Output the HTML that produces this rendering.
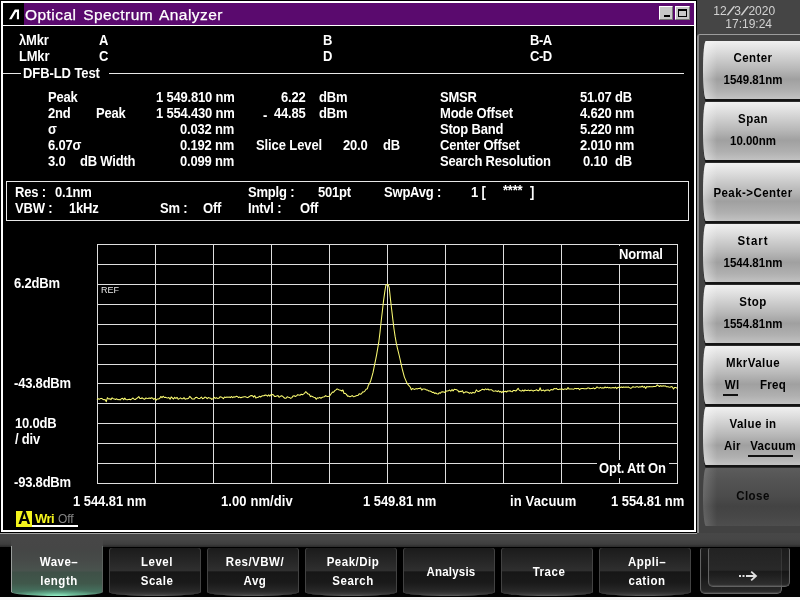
<!DOCTYPE html>
<html><head><meta charset="utf-8"><title>Optical Spectrum Analyzer</title>
<style>
*{margin:0;padding:0;box-sizing:border-box}
html,body{width:800px;height:600px;overflow:hidden;background:#000}
body{position:relative;font-family:"Liberation Sans",sans-serif;color:#fff}
.abs{position:absolute}
#win{position:absolute;left:0;top:0;width:697px;height:533px;background:#000}
#frame{position:absolute;left:1px;top:1px;width:695px;height:531px;border:2px solid #fff;border-right-width:2px}
#title{position:absolute;left:3px;top:3px;width:691px;height:22px;background:#5a0a6e}
#title .blk{position:absolute;left:0;top:0;width:21px;height:22px;background:#000}
#title .tx{position:absolute;left:22px;top:3px;font-size:15.5px;line-height:18px;letter-spacing:.45px;word-spacing:2px;white-space:nowrap;color:#fff;-webkit-text-stroke:.25px #fff}
#tline{position:absolute;left:3px;top:24.7px;width:691px;height:1px;background:#fff}
.wb{position:absolute;top:3px;width:14px;height:14px;background:#c8c8c8;border:1px solid #fff;border-right-color:#777;border-bottom-color:#777}
.t{position:absolute;font-size:13px;line-height:16px;font-weight:bold;white-space:nowrap;color:#fff;letter-spacing:-.2px;transform:scaleY(1.08);transform-origin:0 12.5px;margin:.5px 0 0 .5px}
.t.ref{font-size:9px;font-weight:normal;line-height:12px;color:#e8e8e8;letter-spacing:0;transform:none}
.hl{position:absolute;height:1px;background:#e8e8e8}
#resbox{position:absolute;left:6px;top:181px;width:683px;height:40px;border:1px solid #e8e8e8}
#chart{position:absolute;left:0;top:0}
/* right panel */
#side{position:absolute;left:697px;top:0;width:103px;height:547px;background:#454545}
#date{position:absolute;left:0;top:5px;width:103px;font-size:12px;line-height:13px;color:#d2d2d2;white-space:nowrap}
#date span{position:absolute}
#date b{font-weight:normal;margin:0 2.1px;display:inline-block;transform:scaleX(1.9) skewX(-8deg)}
#sframe{position:absolute;left:0;top:34px;width:110px;height:520px;border:1px solid #9c9c9c;border-left:2px solid #8c8c8c;border-radius:3px 0 0 0;background:#424242}
.sb{position:absolute;left:5.7px;width:100px;height:58.2px;border-radius:3px 0 0 3px / 30px 0 0 30px;
  background:linear-gradient(180deg,#f0f0f0 0%,#dedede 16%,#b8b8b8 48%,#a0a0a0 66%,#b0b0b0 86%,#c2c2c2 100%);
  box-shadow:0 2.4px 0 #141414;color:#000;font-weight:bold;font-size:11.5px}
.sb:before{content:"";position:absolute;left:0;top:0;width:14px;height:100%;border-radius:inherit;background:linear-gradient(90deg,rgba(255,255,255,.42),rgba(255,255,255,0))}
.sb.dark{background:linear-gradient(180deg,#5c5c5c 0%,#545454 20%,#4b4b4b 50%,#434343 66%,#484848 85%,#4e4e4e 100%);box-shadow:none;color:#080808}
.sb.dark:before{background:linear-gradient(90deg,rgba(255,255,255,.16),rgba(255,255,255,0))}
.sb .l{position:absolute;left:1px;width:98px;text-align:center;line-height:14px;white-space:nowrap;letter-spacing:.45px}
.sb .l2{letter-spacing:0}
.sb .l span{letter-spacing:.3px}
.sb .ul{position:absolute;height:1.6px;background:#111}
/* bottom */
#band{position:absolute;left:0;top:533px;width:800px;height:14px;background:linear-gradient(180deg,#474747 0,#464646 45%,#3e3e3e 80%,#2a2a2a 100%)}
#band b{position:absolute;left:11px;top:1px;width:92px;height:13px;background:linear-gradient(180deg,#474747,#464646)}
#band i{position:absolute;left:0;top:0;width:697px;height:1px;background:#a4a4a4}
#bot{position:absolute;left:0;top:547px;width:800px;height:51px;background:#000}
#botline{position:absolute;left:0;top:597px;width:800px;height:3px;background:#f4f4f4}
.tab{position:absolute;top:1px;width:92px;height:48px;border-radius:3px 3px 46px 46px / 3px 3px 4px 4px;
  background:linear-gradient(180deg,#1b1b1b 0%,#242424 22%,#2f2f2f 47%,#161616 50%,#1a1a1a 72%,#282828 90%,#3a3a3a 96%,#5c5c5c 100%);
  box-shadow:inset 1px 0 0 #424242,inset -1px 0 0 #424242}
.tab.sel{top:-1px;height:50px;border-radius:0 0 46px 46px / 0 0 4px 4px;
  background:radial-gradient(ellipse 46px 7px at 50% 100%,rgba(150,240,200,.95) 0%,rgba(120,210,170,.55) 45%,rgba(90,160,130,0) 100%),
  linear-gradient(180deg,#464646 0%,#454746 12%,#474b49 30%,#49534e 50%,#3f5047 52%,#40584b 75%,#467360 92%,#5fa385 100%);
  box-shadow:inset 1px 0 0 #9a9e9c,inset -1px 0 0 #5c625f}
.tl{position:absolute;left:1.5px;width:92px;text-align:center;font-size:11.5px;line-height:14px;font-weight:bold;color:#fff;letter-spacing:.5px;white-space:nowrap}
.atab{position:absolute;width:82px;border-radius:2px 2px 5px 5px;border:1px solid #626262;border-top:none;box-shadow:inset 0 -1px 1px rgba(255,255,255,.12)}
.t,.l,.tl,#date,.tx{will-change:transform}
.l,.tl{transform:scaleY(1.12);transform-origin:0 10.8px}
</style></head>
<body>
<div id="win">
  <div id="frame"></div>
  <div id="title"><div class="blk"></div>
    <svg class="abs" style="left:5px;top:4.6px" width="13" height="13" viewBox="0 0 13 13"><path d="M1 11.2 L6.8 1.6 L11 1.6 L11 11.2 L8.9 11.2 L8.9 3.9 L8.0 3.9 L3.6 11.2 Z" fill="#fff"/></svg>
    <span class="tx">Optical Spectrum Analyzer</span>
    <div class="wb" style="left:656px"><i class="abs" style="left:4px;top:8px;width:6px;height:2px;background:#000"></i></div>
    <div class="wb" style="left:672px;width:15px"><i class="abs" style="left:2px;top:2px;width:9px;height:8px;border:1px solid #000;border-top-width:2px"></i></div>
  </div>
  <div id="tline"></div>
  <div class="hl" style="left:3px;top:73px;width:18px"></div>
  <div class="hl" style="left:109px;top:73px;width:575px"></div>
  <div id="resbox"></div>
  <svg id="chart" width="697" height="533" viewBox="0 0 697 533" shape-rendering="crispEdges">
    <g fill="#dedede"><rect x="97" y="244" width="1" height="240"/><rect x="155" y="244" width="1" height="240"/><rect x="213" y="244" width="1" height="240"/><rect x="271" y="244" width="1" height="240"/><rect x="329" y="244" width="1" height="240"/><rect x="387" y="244" width="1" height="240"/><rect x="445" y="244" width="1" height="240"/><rect x="503" y="244" width="1" height="240"/><rect x="561" y="244" width="1" height="240"/><rect x="619" y="244" width="1" height="240"/><rect x="677" y="244" width="1" height="240"/><rect x="97" y="244" width="581" height="1"/><rect x="97" y="264" width="581" height="1"/><rect x="97" y="284" width="581" height="1"/><rect x="97" y="304" width="581" height="1"/><rect x="97" y="324" width="581" height="1"/><rect x="97" y="344" width="581" height="1"/><rect x="97" y="364" width="581" height="1"/><rect x="97" y="383" width="581" height="1"/><rect x="97" y="403" width="581" height="1"/><rect x="97" y="423" width="581" height="1"/><rect x="97" y="443" width="581" height="1"/><rect x="97" y="463" width="581" height="1"/><rect x="97" y="483" width="581" height="1"/></g>
    <polyline points="97.0,399.7 98.2,398.7 99.3,399.3 100.5,398.6 101.6,398.4 102.8,399.2 104.0,399.7 105.1,399.6 106.3,401.7 107.4,397.7 108.6,399.0 109.8,398.7 110.9,399.6 112.1,397.9 113.2,398.7 114.4,399.1 115.6,399.5 116.7,398.8 117.9,399.7 119.0,399.4 120.2,400.0 121.4,398.7 122.5,398.3 123.7,399.6 124.8,398.1 126.0,399.6 127.2,399.8 128.3,399.4 129.5,399.2 130.6,399.7 131.8,398.9 133.0,398.0 134.1,399.2 135.3,399.5 136.4,398.6 137.6,397.8 138.8,396.6 139.9,398.4 141.1,398.5 142.2,397.8 143.4,398.8 144.6,399.3 145.7,398.1 146.9,398.3 148.0,398.4 149.2,398.0 150.4,398.5 151.5,397.7 152.7,398.2 153.8,399.4 155.0,398.4 156.2,400.1 157.3,399.0 158.5,399.0 159.6,398.6 160.8,396.5 162.0,397.6 163.1,396.2 164.3,397.5 165.4,397.3 166.6,397.7 167.8,398.0 168.9,397.5 170.1,399.3 171.2,396.9 172.4,398.0 173.6,399.0 174.7,397.3 175.9,398.5 177.0,397.3 178.2,399.3 179.4,398.6 180.5,397.9 181.7,398.8 182.8,398.8 184.0,397.6 185.2,399.2 186.3,398.8 187.5,398.7 188.6,398.2 189.8,396.4 191.0,397.6 192.1,399.0 193.3,398.9 194.4,399.0 195.6,397.4 196.8,397.3 197.9,398.2 199.1,398.6 200.2,398.2 201.4,397.0 202.6,398.7 203.7,398.3 204.9,397.1 206.0,397.4 207.2,398.7 208.4,397.5 209.5,398.1 210.7,398.2 211.8,399.4 213.0,398.6 214.2,397.3 215.3,398.4 216.5,397.8 217.6,398.4 218.8,398.3 220.0,396.8 221.1,397.0 222.3,397.6 223.4,398.6 224.6,397.0 225.8,397.5 226.9,397.1 228.1,397.3 229.2,397.1 230.4,397.6 231.6,396.5 232.7,397.6 233.9,396.8 235.0,397.2 236.2,396.3 237.4,396.5 238.5,397.6 239.7,397.1 240.8,397.8 242.0,397.2 243.2,396.9 244.3,396.7 245.5,396.8 246.6,397.2 247.8,397.6 249.0,396.8 250.1,396.1 251.3,395.6 252.4,395.7 253.6,397.1 254.8,395.7 255.9,398.1 257.1,397.4 258.2,397.3 259.4,396.3 260.6,397.0 261.7,396.1 262.9,395.8 264.0,395.7 265.2,395.0 266.4,395.2 267.5,396.1 268.7,394.8 269.8,396.2 271.0,394.7 272.2,394.5 273.3,394.7 274.5,396.4 275.6,396.5 276.8,395.9 278.0,395.6 279.1,397.3 280.3,396.4 281.4,395.7 282.6,396.2 283.8,397.5 284.9,398.2 286.1,398.2 287.2,396.7 288.4,397.3 289.6,397.6 290.7,398.4 291.9,397.6 293.0,396.0 294.2,395.8 295.4,396.5 296.5,395.9 297.7,394.7 298.8,394.9 300.0,395.3 301.2,394.2 302.3,394.8 303.5,394.1 304.6,393.2 305.8,391.7 307.0,393.0 308.1,394.0 309.3,394.3 310.4,396.6 311.6,396.1 312.8,396.8 313.9,397.2 315.1,397.6 316.2,399.3 317.4,397.9 318.6,398.1 319.7,397.4 320.9,398.2 322.0,397.5 323.2,396.9 324.4,396.8 325.5,395.6 326.7,396.3 327.8,396.5 329.0,396.3 330.2,395.2 331.3,393.5 332.5,392.1 333.6,392.3 334.8,390.6 336.0,389.9 337.1,388.9 338.3,389.5 339.4,390.0 340.6,390.2 341.8,391.0 342.9,390.0 344.1,393.5 345.2,393.4 346.4,394.4 347.6,396.1 348.7,396.1 349.9,396.7 351.0,396.3 352.2,395.6 353.4,396.7 354.5,396.4 355.7,395.9 356.8,395.6 358.0,395.5 359.2,393.8 360.3,394.2 361.5,393.8 362.6,391.9 363.8,392.0 365.0,390.8 366.1,389.2 367.3,388.8 368.4,385.1 369.6,383.5 370.8,380.5 371.9,376.7 373.1,372.2 374.2,366.6 375.4,360.9 376.6,354.8 377.7,348.3 378.9,341.3 380.0,332.3 381.2,321.0 382.4,310.7 383.5,301.1 384.7,292.4 385.8,285.5 387.0,284.4 388.2,284.4 389.3,288.2 390.5,299.5 391.6,309.0 392.8,319.1 394.0,329.0 395.1,336.4 396.3,343.2 397.4,348.1 398.6,353.0 399.8,358.0 400.9,363.2 402.1,368.3 403.2,372.7 404.4,377.1 405.6,379.9 406.7,382.5 407.9,384.4 409.0,385.7 410.2,387.0 411.4,389.8 412.5,388.5 413.7,389.0 414.8,389.4 416.0,388.6 417.2,388.9 418.3,388.4 419.5,388.4 420.6,387.9 421.8,390.1 423.0,388.9 424.1,388.9 425.3,389.2 426.4,390.0 427.6,390.1 428.8,391.0 429.9,391.0 431.1,391.4 432.2,392.4 433.4,392.2 434.6,393.4 435.7,392.9 436.9,393.7 438.0,394.1 439.2,392.8 440.4,393.3 441.5,391.9 442.7,391.8 443.8,391.9 445.0,392.4 446.2,391.1 447.3,390.9 448.5,390.8 449.6,390.0 450.8,391.2 452.0,389.5 453.1,390.9 454.3,389.3 455.4,389.5 456.6,389.8 457.8,390.4 458.9,392.0 460.1,391.2 461.2,391.7 462.4,390.7 463.6,393.0 464.7,392.5 465.9,391.8 467.0,391.9 468.2,392.4 469.4,393.4 470.5,392.6 471.7,393.4 472.8,392.3 474.0,392.9 475.2,392.4 476.3,389.9 477.5,391.2 478.6,391.5 479.8,390.7 481.0,390.2 482.1,389.3 483.3,389.5 484.4,389.9 485.6,388.9 486.8,389.6 487.9,389.0 489.1,390.0 490.2,389.7 491.4,389.7 492.6,390.7 493.7,391.2 494.9,391.1 496.0,390.8 497.2,391.7 498.4,390.7 499.5,391.9 500.7,391.4 501.8,392.6 503.0,391.3 504.2,391.7 505.3,391.3 506.5,392.0 507.6,391.0 508.8,391.1 510.0,390.8 511.1,391.5 512.3,391.7 513.4,390.4 514.6,390.6 515.8,391.0 516.9,390.0 518.1,388.3 519.2,390.1 520.4,390.8 521.6,391.1 522.7,390.1 523.9,391.2 525.0,389.9 526.2,390.5 527.4,390.5 528.5,390.1 529.7,390.7 530.8,390.3 532.0,390.3 533.2,391.2 534.3,390.4 535.5,390.2 536.6,389.8 537.8,390.6 539.0,390.6 540.1,387.8 541.3,390.8 542.4,390.6 543.6,390.1 544.8,391.1 545.9,390.1 547.1,390.3 548.2,389.8 549.4,391.0 550.6,389.8 551.7,389.6 552.9,390.0 554.0,388.6 555.2,388.7 556.4,388.4 557.5,389.4 558.7,389.6 559.8,389.0 561.0,389.3 562.2,388.9 563.3,389.6 564.5,389.0 565.6,389.0 566.8,389.5 568.0,387.5 569.1,389.1 570.3,389.0 571.4,388.9 572.6,389.1 573.8,389.2 574.9,388.4 576.1,388.6 577.2,388.6 578.4,388.4 579.6,389.7 580.7,388.7 581.9,388.4 583.0,388.5 584.2,388.7 585.4,388.8 586.5,388.7 587.7,388.0 588.8,387.9 590.0,388.7 591.2,388.6 592.3,388.5 593.5,387.9 594.6,388.8 595.8,388.2 597.0,386.9 598.1,387.7 599.3,388.1 600.4,387.4 601.6,388.1 602.8,387.7 603.9,388.1 605.1,387.0 606.2,387.8 607.4,387.3 608.6,387.9 609.7,387.5 610.9,388.1 612.0,387.7 613.2,387.5 614.4,388.0 615.5,387.2 616.7,388.6 617.8,387.4 619.0,387.3 620.2,387.4 621.3,386.9 622.5,387.5 623.6,386.9 624.8,387.2 626.0,387.0 627.1,387.3 628.3,386.9 629.4,387.6 630.6,388.4 631.8,387.7 632.9,386.7 634.1,387.1 635.2,387.3 636.4,386.8 637.6,386.8 638.7,387.4 639.9,386.8 641.0,387.0 642.2,386.1 643.4,387.3 644.5,386.5 645.7,388.4 646.8,386.5 648.0,386.9 649.2,386.5 650.3,386.7 651.5,386.7 652.6,386.8 653.8,386.4 655.0,386.6 656.1,386.2 657.3,384.9 658.4,385.8 659.6,386.5 660.8,385.6 661.9,386.4 663.1,385.7 664.2,386.1 665.4,385.9 666.6,386.8 667.7,386.7 668.9,387.0 670.0,387.2 671.2,386.6 672.4,387.1 673.5,389.0 674.7,387.4 675.8,387.4 677.0,388.4" fill="none" stroke="#fbfb72" stroke-width="1.05" shape-rendering="auto" stroke-linejoin="round"/>
  </svg>
<span class="t" style="top:32.5px;left:18px;">λMkr</span>
<span class="t" style="top:32.5px;left:98px;">A</span>
<span class="t" style="top:32.5px;left:322px;">B</span>
<span class="t" style="top:32.5px;left:529.7px;letter-spacing:-.5px">B-A</span>
<span class="t" style="top:48.5px;left:18px;">LMkr</span>
<span class="t" style="top:48.5px;left:98px;">C</span>
<span class="t" style="top:48.5px;left:322px;">D</span>
<span class="t" style="top:48.5px;left:529.7px;letter-spacing:-.5px">C-D</span>
<span class="t" style="top:65.0px;left:22.2px;letter-spacing:-.08px">DFB-LD Test</span>
<span class="t" style="top:89.4px;left:47px;">Peak</span>
<span class="t" style="top:89.4px;right:462.7px;">1 549.810 nm</span>
<span class="t" style="top:89.4px;right:391.2px;">6.22</span>
<span class="t" style="top:89.4px;left:318.5px;">dBm</span>
<span class="t" style="top:89.4px;left:439.5px;">SMSR</span>
<span class="t" style="top:89.4px;right:65px;">51.07 dB</span>
<span class="t" style="top:105.4px;left:47px;">2nd</span>
<span class="t" style="top:105.4px;left:95px;">Peak</span>
<span class="t" style="top:105.4px;right:462.7px;">1 554.430 nm</span>
<span class="t" style="top:107.4px;left:262px;">-</span>
<span class="t" style="top:105.4px;right:391.2px;">44.85</span>
<span class="t" style="top:105.4px;left:318.5px;">dBm</span>
<span class="t" style="top:105.4px;left:439.4px;">Mode Offset</span>
<span class="t" style="top:105.4px;right:63px;">4.620 nm</span>
<span class="t" style="top:121.4px;left:47px;">σ</span>
<span class="t" style="top:121.4px;right:462.7px;">0.032 nm</span>
<span class="t" style="top:121.4px;left:439.4px;">Stop Band</span>
<span class="t" style="top:121.4px;right:63px;">5.220 nm</span>
<span class="t" style="top:137.4px;left:47px;">6.07σ</span>
<span class="t" style="top:137.4px;right:462.7px;">0.192 nm</span>
<span class="t" style="top:137.4px;left:255.5px;letter-spacing:-.1px">Slice Level</span>
<span class="t" style="top:137.4px;right:329.5px;">20.0</span>
<span class="t" style="top:137.4px;left:382.5px;">dB</span>
<span class="t" style="top:137.4px;left:439.4px;">Center Offset</span>
<span class="t" style="top:137.4px;right:63px;">2.010 nm</span>
<span class="t" style="top:153.4px;left:47px;">3.0</span>
<span class="t" style="top:153.4px;left:79px;">dB Width</span>
<span class="t" style="top:153.4px;right:462.7px;">0.099 nm</span>
<span class="t" style="top:153.4px;left:439.4px;">Search Resolution</span>
<span class="t" style="top:153.4px;right:89.20000000000005px;">0.10</span>
<span class="t" style="top:153.4px;left:614.5px;">dB</span>
<span class="t" style="top:184.0px;left:14px;">Res :</span>
<span class="t" style="top:184.0px;left:54px;">0.1nm</span>
<span class="t" style="top:184.0px;left:247px;">Smplg :</span>
<span class="t" style="top:184.0px;left:317px;">501pt</span>
<span class="t" style="top:184.0px;left:383px;">SwpAvg :</span>
<span class="t" style="top:184.0px;left:470px;">1 [</span>
<span class="t" style="top:182.5px;left:502px;">****</span>
<span class="t" style="top:184.0px;left:529px;">]</span>
<span class="t" style="top:200.0px;left:14px;">VBW :</span>
<span class="t" style="top:200.0px;left:68px;">1kHz</span>
<span class="t" style="top:200.0px;left:159px;">Sm :</span>
<span class="t" style="top:200.0px;left:202px;">Off</span>
<span class="t" style="top:200.0px;left:247px;">Intvl :</span>
<span class="t" style="top:200.0px;left:299px;">Off</span>
<span class="t" style="top:275.5px;left:13px;">6.2dBm</span>
<span class="t" style="top:375.5px;left:13px;">-43.8dBm</span>
<span class="t" style="top:415.1px;left:14px;">10.0dB</span>
<span class="t" style="top:431.3px;left:14px;">/ div</span>
<span class="t" style="top:474.8px;left:13px;">-93.8dBm</span>
<span class="t" style="top:493.0px;left:72.5px;letter-spacing:-.05px">1 544.81 nm</span>
<span class="t" style="top:493.0px;left:220px;letter-spacing:.1px">1.00 nm/div</span>
<span class="t" style="top:493.0px;left:362px;letter-spacing:-.05px">1 549.81 nm</span>
<span class="t" style="top:493.0px;left:509px;letter-spacing:.15px">in Vacuum</span>
<span class="t" style="top:493.0px;right:13px;letter-spacing:-.05px">1 554.81 nm</span>
<span class="t" style="top:246.0px;left:614px;background:#000;padding:0 4px 0 4px;">Normal</span>
<span class="t" style="top:460.0px;left:596px;background:#000;padding:0 3px 0 2px;">Opt. Att On</span>
<span class="t ref" style="top:283px;left:100px;">REF</span>
  <!-- trace status -->
  <div class="abs" style="left:16px;top:511px;width:16px;height:15.5px;background:#f4f41e"></div>
  <span class="t" style="left:17.2px;top:507.8px;font-size:17.5px;line-height:20px;color:#000;transform:none;letter-spacing:0">A</span>
  <span class="t" style="left:34px;top:510.5px;color:#f4f41e;transform:none;letter-spacing:-.5px">Wri</span>
  <span class="t" style="left:57.5px;top:510.7px;color:#858585;font-weight:normal;font-size:12px;transform:none;letter-spacing:-.1px">Off</span>
  <div class="abs" style="left:32px;top:524.7px;width:46px;height:2px;background:#fff"></div>
</div>
<div id="side">
  <div id="date"><span style="left:16.3px;top:0">12<b>/</b>3<b>/</b>2020</span><span style="left:28.3px;top:13px">17:19:24</span></div>
  <div id="sframe"></div>
<div class="sb" style="top:41px"><span class="l l1" style="top:9.5px">Center</span><span class="l l2" style="top:31.6px">1549.81nm</span></div>
<div class="sb" style="top:102px"><span class="l l1" style="top:9.5px">Span</span><span class="l l2" style="top:31.6px">10.00nm</span></div>
<div class="sb" style="top:163px"><span class="l l1" style="top:23px">Peak-&gt;Center</span></div>
<div class="sb" style="top:224px"><span class="l l1" style="top:9.5px"><span style="letter-spacing:1px">Start</span></span><span class="l l2" style="top:31.6px">1544.81nm</span></div>
<div class="sb" style="top:285px"><span class="l l1" style="top:9.5px">Stop</span><span class="l l2" style="top:31.6px">1554.81nm</span></div>
<div class="sb" style="top:346px"><span class="l l1" style="top:9.5px">MkrValue</span><span class="l l2" style="top:31.6px"><span style="position:absolute;left:20.8px">Wl</span><span style="position:absolute;left:56px">Freq</span></span><i class="ul" style="left:20.3px;width:15px;top:48.2px"></i></div>
<div class="sb" style="top:407px"><span class="l l1" style="top:9.5px">Value in</span><span class="l l2" style="top:31.6px"><span style="position:absolute;left:20px">Air</span><span style="position:absolute;left:46.2px">Vacuum</span></span><i class="ul" style="left:45.5px;width:45px;top:48.3px"></i></div>
<div class="sb dark" style="top:468px"><span class="l l1" style="top:21.4px">Close</span></div>
</div>
<div id="band"><i></i><b></b></div>
<div id="bot">
<div class="tab sel" style="left:11px"><span class="tl" style="top:9px">Wave–</span><span class="tl" style="top:28px">length</span></div>
<div class="tab" style="left:109px"><span class="tl" style="top:7px">Level</span><span class="tl" style="top:26px">Scale</span></div>
<div class="tab" style="left:207px"><span class="tl" style="top:7px">Res/VBW/</span><span class="tl" style="top:26px">Avg</span></div>
<div class="tab" style="left:305px"><span class="tl" style="top:7px">Peak/Dip</span><span class="tl" style="top:26px">Search</span></div>
<div class="tab" style="left:403px"><span class="tl" style="top:17px"><span style="letter-spacing:.2px">Analysis</span></span></div>
<div class="tab" style="left:501px"><span class="tl" style="top:17px">Trace</span></div>
<div class="tab" style="left:599px"><span class="tl" style="top:7px">Appli–</span><span class="tl" style="top:26px">cation</span></div>
  <div class="atab" style="left:700px;top:1px;height:46px;background:linear-gradient(180deg,#1c1c1c,#161616 60%,#2a2a2a)"></div>
  <div class="atab" style="left:708px;top:1px;height:39px;background:linear-gradient(180deg,rgba(36,36,36,.78) 0%,rgba(46,46,46,.78) 58%,rgba(28,28,28,.78) 62%,rgba(52,52,52,.78) 100%)"></div>
  <svg class="abs" style="left:737px;top:21px" width="24" height="16" viewBox="0 0 24 16"><g stroke="#e0e0e0" stroke-width="1.8" fill="none"><path d="M2 8h2M5.5 8h2M9 8h10"/><path d="M14.2 3.6L19 8L14.2 12.4" stroke-linejoin="miter"/></g></svg>
</div>
<div id="botline"></div>
</body></html>
